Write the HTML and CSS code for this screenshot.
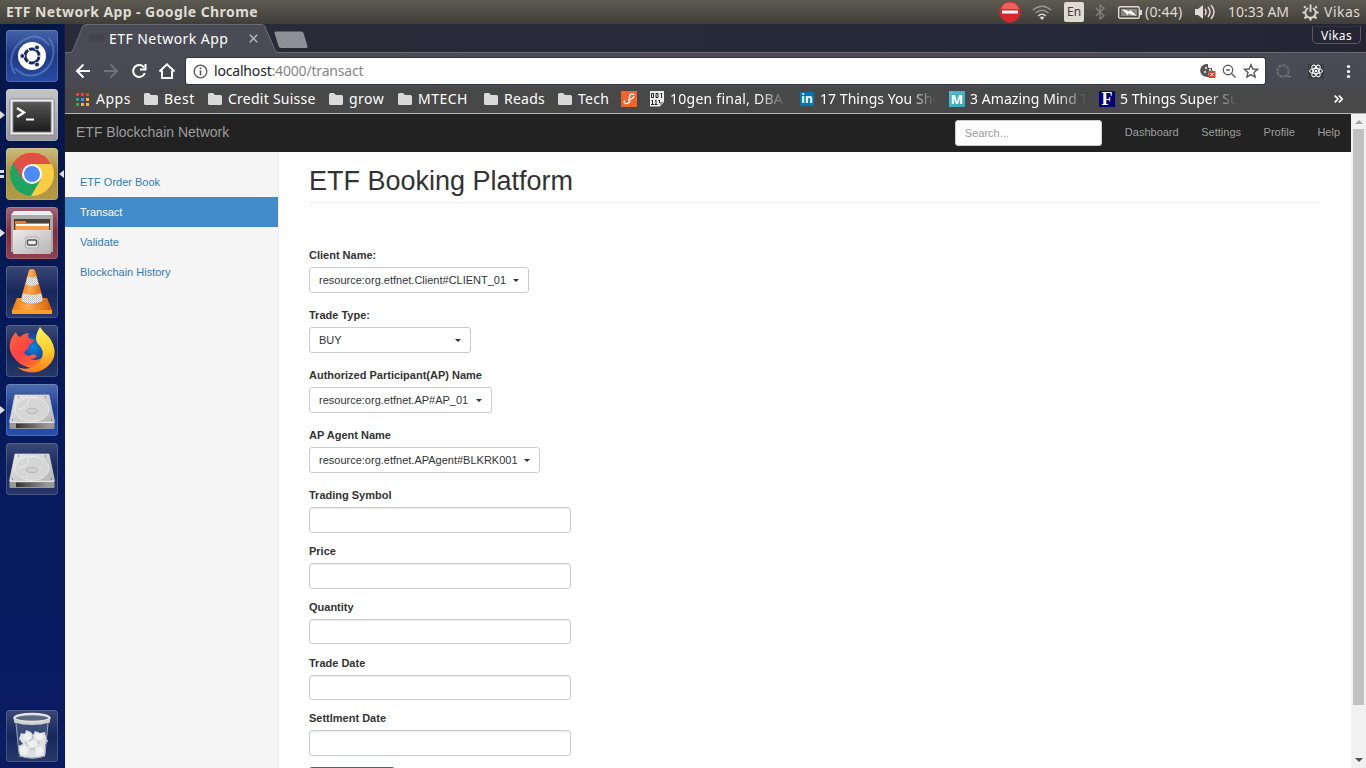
FILE: index.html
```html
<!DOCTYPE html>
<html lang="en">
<head>
<meta charset="utf-8">
<title>ETF Network App</title>
<link rel="stylesheet" href="styles.css">
</head>
<body>
<svg class="defs" width="0" height="0" aria-hidden="true">
  <defs>
    <linearGradient id="metal" x1="0" y1="0" x2="1" y2="1"><stop offset="0" stop-color="#ececec"/><stop offset="1" stop-color="#b4b4b4"/></linearGradient>
    <linearGradient id="dark" x1="0" y1="0" x2="0" y2="1"><stop offset="0" stop-color="#555"/><stop offset="1" stop-color="#1c1c1c"/></linearGradient>
    <linearGradient id="slot" x1="0" y1="0" x2="1" y2="0"><stop offset="0" stop-color="#333"/><stop offset="1" stop-color="#999"/></linearGradient>
    <linearGradient id="orange" x1="0" y1="0" x2="1" y2="0"><stop offset="0" stop-color="#f57900"/><stop offset=".4" stop-color="#ffab52"/><stop offset="1" stop-color="#d75c00"/></linearGradient>
    <linearGradient id="fox" x1="0" y1="0" x2="1" y2="1"><stop offset="0" stop-color="#ff6a35"/><stop offset=".45" stop-color="#ff3f45"/><stop offset="1" stop-color="#ff9a18"/></linearGradient>
    <linearGradient id="flame" x1="0" y1="0" x2="0" y2="1"><stop offset="0" stop-color="#fff45a"/><stop offset=".55" stop-color="#ffc928"/><stop offset="1" stop-color="#ff7a1c"/></linearGradient>
    <radialGradient id="globe"><stop offset="0" stop-color="#0a85df"/><stop offset="1" stop-color="#173a94"/></radialGradient>
    <pattern id="check" width="2" height="2" patternUnits="userSpaceOnUse"><rect width="2" height="2" fill="#f2f2f2"/><rect width="1" height="1" fill="#b5b5b5"/><rect x="1" y="1" width="1" height="1" fill="#c8c8c8"/></pattern>
    <symbol id="folder" viewBox="0 0 14 12"><path d="M0 1.500Q0 0 1.500 0H5l2 2h5.500Q14 2 14 3.500V10.500Q14 12 12.500 12h-11Q0 12 0 10.500z" fill="#dadada"/></symbol>
    <symbol id="drive" viewBox="0 0 52 52">
      <path d="M9 11h34l5.500 27h-45z" fill="url(#metal)" stroke="#ddd" stroke-width=".7"/>
      <path d="M3.500 38h45v6q0 1-1 1h-43q-1 0-1-1z" fill="#999"/><path d="M10 39.500h31v4.500H10z" fill="url(#slot)"/><path d="M4 38.500h44" stroke="#e6e6e6"/>
      <ellipse cx="26" cy="25.500" rx="17" ry="12" fill="#d6d6d6" stroke="#ececec" stroke-width=".8"/>
      <path d="M30 13q-8 0-8 5t-9 7" fill="none" stroke="#eee"/>
      <ellipse cx="26" cy="27" rx="5.500" ry="2.700" fill="#d0d0d0" stroke="#aaa" stroke-width=".7"/><path d="M6 36h1M45 36h1M12 13h1M39 13h1" stroke="#555"/>
    </symbol>
  </defs>
</svg>

<header class="panel">
  <div class="panel-title">ETF Network App - Google Chrome</div>
  <div class="indicators">
    <svg class="ind-stop" width="22" height="22" viewBox="0 0 22 22"><circle cx="11" cy="11" r="10.300" fill="#d9262c" stroke="#b33" stroke-width=".8"/><path d="M2 8a9.500 9.500 0 0 1 18 0z" fill="#ec625c"/><rect x="3" y="9.500" width="16" height="3" fill="#fff"/></svg>
    <svg class="ind-wifi" width="20" height="16" viewBox="0 0 20 16" fill="none" stroke="#99968e" stroke-width="1.500"><path d="M.8 6q9.200-7.500 18.400 0M3.500 9q6.500-5.400 13 0"/><path d="M6.200 12q3.800-3.400 7.600 0" stroke="#dfdbd2"/><path d="M10 16l-2.300-2.500q2.300-1.800 4.600 0z" fill="#dfdbd2" stroke="none"/></svg>
    <div class="ind-lang">En</div>
    <svg class="ind-bt" width="10" height="16" viewBox="0 0 10 16" fill="none" stroke="#85827a" stroke-width="1.300"><path d="M1 4l8 8-4 3V1l4 3-8 8"/></svg>
    <svg class="ind-battery" width="24" height="13" viewBox="0 0 24 13"><rect x=".7" y=".7" width="20.600" height="11.600" rx="1.500" fill="none" stroke="#dfdbd2" stroke-width="1.400"/><path d="M22 4h2v5h-2z" fill="#dfdbd2"/><path d="M3 3h16v7H3z" fill="#8b8880"/><path d="M4 3l8 2.500v-2l6.500 6.500-8.500-2.500v2z" fill="#fff"/></svg>
    <span class="ind-text time-left">(0:44)</span>
    <svg class="ind-sound" width="21" height="16" viewBox="0 0 21 16" fill="none" stroke="#dfdbd2" stroke-width="1.500"><path d="M0 5h3l5-4v14l-5-4H0z" fill="#dfdbd2" stroke="none"/><path d="M10 5q2 3 0 6M13 3q4 5 0 10M16 1q6 7 0 14"/></svg>
    <span class="ind-text clock">10:33 AM</span>
    <svg class="ind-gear" width="17" height="17" viewBox="0 0 18 18" fill="none" stroke="#dfdbd2"><path d="M6.500 4.200a5.500 5.500 0 1 0 5 0" stroke-width="2"/><path d="M9 .5v8" stroke-width="2"/><path d="M3.800 4L2.300 2.500M14.200 4l1.500-1.500M3 9H.5M15 9h2.500M4.500 13.500L2.700 15.300M13.500 13.500l1.800 1.800M9 15v2.500" stroke-width="2.300"/></svg>
    <span class="ind-text user">Vikas</span>
  </div>
</header>

<div class="desktop">
  <nav class="launcher">
    <div class="tile tile-ubuntu">
      <svg viewBox="0 0 52 52"><path d="M9 44A24 24 0 0 1 20 9q12-7 23 6M43 8a24 24 0 0 1-10 36q-14 5-24-6" fill="none" stroke="#8ba4dc" stroke-width="2" opacity=".4"/><circle cx="26" cy="26" r="14" fill="#fff"/><circle cx="26" cy="26" r="7" fill="none" stroke="#1a2a62" stroke-width="3" stroke-dasharray="13.400 1.260" transform="rotate(5 26 26)"/><g fill="#1a2a62" stroke="#fff" stroke-width=".8"><circle cx="16.300" cy="26" r="2.400"/><circle cx="31" cy="17.500" r="2.400"/><circle cx="31" cy="34.500" r="2.400"/></g></svg>
    </div>
    <div class="tile tile-terminal"><i class="mark mark-left"></i>
      <svg viewBox="0 0 52 52"><rect x="4" y="10" width="44" height="36" rx="1.500" fill="#eee" stroke="#888"/><rect x="7" y="13" width="38" height="30" fill="url(#dark)" stroke="#777"/><path d="M11 19l7 4.500-7 4.500" fill="none" stroke="#f4f4f4" stroke-width="2.400"/><path d="M20 30.500h8" stroke="#fff" stroke-width="2"/></svg>
    </div>
    <div class="tile tile-chrome"><i class="mark mark-left"></i><i class="mark mark-left mark-second"></i><i class="mark mark-right"></i>
      <svg viewBox="0 0 52 52"><circle cx="26" cy="26" r="22" fill="#fccd42"/><path d="M26 26L6.900 15A22 22 0 0 0 25 48l10-17z" fill="#1ea362"/><path d="M7 15l10 17 9-16h19.200A22 22 0 0 0 7 15z" fill="#df5046"/><circle cx="26" cy="26" r="10" fill="#fff"/><circle cx="26" cy="26" r="8" fill="#4c8bf5"/></svg>
    </div>
    <div class="tile tile-files"><i class="mark mark-left"></i>
      <svg viewBox="0 0 52 52"><path d="M8 4h36l3 5v36H5V9z" fill="#aaa"/><path d="M8 4h36l3 4H5z" fill="#eee"/><path d="M8 12h36v12H8z" fill="#4a4038"/><path d="M9 14h10l2 2h22v7H9z" fill="#e87925"/><path d="M10 17h33v2H10z" fill="#fff"/><path d="M10 19h33v5H10z" fill="#f6a04a"/><path d="M7 23h38v23q0 1-1 1H8q-1 0-1-1z" fill="url(#metal)"/><rect x="19.500" y="30" width="13" height="11" rx="2" fill="#ddd" stroke="#aaa"/><rect x="21.500" y="33" width="9" height="5" rx="1" fill="#eee" stroke="#555" stroke-width="1.500"/></svg>
    </div>
    <div class="tile">
      <svg viewBox="0 0 52 52"><path d="M11 32h30l5 12v4H6v-4z" fill="url(#orange)"/><path d="M6 44h40v4H6z" fill="#f7a128"/><path d="M23 4q3-2 6 0l9 32q-12 6-24 0z" fill="url(#orange)"/><path d="M22 10q4 3 8 0l2.500 8q-6.500 4-13 0zM17 27q9 4 18 0l2 8q-11 5-22 0z" fill="url(#check)"/></svg>
    </div>
    <div class="tile">
      <svg viewBox="0 0 52 52"><circle cx="27" cy="22" r="16" fill="url(#globe)"/><path d="M10 7q1 4 4 5 4-4 9-4-2 4 1 6l4 1q-1 3-4 4-2 2-2 5-3 1-4 4 3 4 7 2 3-2 6 1-2 3-7 3 8 3 14-3l4-9q8 10 1 17c-14 10-34 2-39-14-1-7 1-13 6-18z" fill="url(#fox)"/><path d="M34 2q3 5 9 10c7 10 8 20 0 28-9 10-24 9-32 2 12 5 23-2 25-10 2-5 0-9-4-13-4-5-1-12 2-17z" fill="url(#flame)"/></svg>
    </div>
    <div class="tile tile-drive"><i class="mark mark-left"></i><svg><use href="#drive"/></svg></div>
    <div class="tile"><svg><use href="#drive"/></svg></div>
    <div class="tile tile-trash">
      <svg viewBox="0 0 52 52"><path d="M9 9l4 36q13 5 26 0l4-36z" fill="#65779f" opacity=".4"/><path d="M12 36l5-2-4-5 2-6 4 1 1-4 5 2 2 3 2-4 5 2 5-1 1 5 2 4-3 4 1 4-1 7q-12 5-25 0z" fill="#dedfe0"/><g fill="#f0f0f0"><path d="M18 24l5-2 3 4-4 5-5-2zM29 24l6-1 3 4-4 4-5-3zM22 32l6-3 4 5-5 4-5-2zM14 38l5-3 4 5-3 5-6-1zM29 39l6-3 3 5-3 4-5 1z"/></g><path d="M26 25l1 4-4 2M34 31l-2 3M19 32l3 4M24 40l3-2 2 3" fill="none" stroke="#b4b6ba"/><path d="M10 13l3 31M42 13l-3 31M13 46q13 4 26 0" stroke="#9aa2bb" fill="none"/><ellipse cx="26" cy="8" rx="17.500" ry="4" fill="#5c6985" stroke="#e4e4e2" stroke-width="2.400"/><path d="M8 9q18 7 36 0v3.500q-18 5-36 0z" fill="#cfd0cd"/></svg>
    </div>
  </nav>

  <main class="window">
    <div class="tabstrip">
      <svg class="tab-shape" width="250" height="29" viewBox="0 0 250 29"><path d="M0 28.500h5Q7 28.500 8 26L17.500 3Q18.500.5 21 .5H197q2 0 3 2.500l10 23q1 2.500 3 2.500H250V29H0z" fill="#4b4b55"/><path d="M0 28.500h5Q7 28.500 8 26L17.500 3Q18.500.5 21 .5H197q2 0 3 2.500l10 23q1 2.500 3 2.500H250" fill="none" stroke="#6c6c75"/><path d="M211 7.500h25q2 0 2.500 1.500l4 13q.5 2-1.500 2h-25q-2 0-2.500-2l-4-13q-.5-1.500 1.500-1.500z" fill="#8e8f97"/></svg>
      <div class="tab"><span class="favicon"></span><span class="tab-title">ETF Network App</span><svg width="9" height="9" viewBox="0 0 9 9"><path d="M.8.8l7.400 7.400M8.200.8L.8 8.200" stroke="#b5b5ba" stroke-width="1.500"/></svg></div>
      <div class="profile">Vikas</div>
    </div>
    <div class="toolbar">
      <svg class="nav-icons" width="121" height="34" viewBox="0 0 121 34" fill="none" stroke="#fff" stroke-width="2"><path d="M25 18H12.500M18.500 11.500L12 18l6.500 6.500"/><path d="M39 18h12.500M45.500 11.500L52 18l-6.500 6.500" stroke="#71717a"/><path d="M79 14.500a6 6 0 1 0 .8 5.500M80.500 11v5.500H75"/><path d="M94.500 18.500L102 11.300l7.500 7.200M97 17.500V25h10v-7.500"/></svg>
      <div class="address">
        <svg width="15" height="15" viewBox="0 0 15 15"><circle cx="7.500" cy="7.500" r="6.300" fill="none" stroke="#555" stroke-width="1.300"/><path d="M7.500 6.500v4.800M7.500 3.600v1.600" stroke="#555" stroke-width="1.600"/></svg>
        <span class="url"><b>localhost</b>:4000/transact</span>
        <svg class="address-icons" width="60" height="18" viewBox="0 0 60 18"><path d="M8 2a7 6.500 0 1 0 6 8L12 8V6q-3 1-4-1z" fill="#555"/><path d="M5 6h2M4 10h2M9 8h2M8 12h1" stroke="#fff" stroke-width="1.500"/><rect x="8.500" y="9" width="7" height="7" fill="#db4437"/><path d="M10.500 11l3 3M13.500 11l-3 3" stroke="#fff"/><circle cx="28" cy="8" r="4.700" fill="none" stroke="#606060" stroke-width="1.400"/><path d="M26 8h4M31.500 11.500l4 4" stroke="#606060" stroke-width="1.500"/><path d="M51 2.700l1.900 4.300 4.700.4-3.600 3.100 1.100 4.600-4.100-2.500-4.100 2.500 1.100-4.600-3.500-3.100 4.600-.4z" fill="none" stroke="#555" stroke-width="1.400"/></svg>
      </div>
      <svg class="extensions" width="101" height="34" viewBox="0 0 101 34"><circle cx="18" cy="18" r="5.700" fill="none" stroke="#686871" stroke-width="2.500" stroke-dasharray="3.500 .8"/><path d="M22 23l4 1" stroke="#77777f" stroke-width="1.500"/><rect x="43" y="11" width="16" height="15" fill="#3c3c43"/><g fill="none" stroke="#fff"><ellipse cx="51" cy="18" rx="6.500" ry="2.600"/><ellipse cx="51" cy="18" rx="6.500" ry="2.600" transform="rotate(60 51 18)"/><ellipse cx="51" cy="18" rx="6.500" ry="2.600" transform="rotate(120 51 18)"/></g><circle cx="51" cy="18" r="1.300" fill="#fff"/><g fill="#fff"><circle cx="83.500" cy="13.500" r="1.600"/><circle cx="83.500" cy="18.500" r="1.600"/><circle cx="83.500" cy="23.500" r="1.600"/></g></svg>
    </div>
    <div class="bookmarks">
      <div class="bm bm-apps"><svg width="13" height="13" viewBox="0 0 13 13"><path d="M0 0h3v3H0zM5 0h3v3H5zM10 0h3v3h-3z" fill="#f33c35"/><path d="M0 5h3v3H0zM0 10h3v3H0z" fill="#32a45b"/><path d="M5 5h3v3H5z" fill="#4389f5"/><path d="M10 5h3v3h-3zM5 10h3v3H5zM10 10h3v3h-3z" fill="#f8b51a"/></svg><span>Apps</span></div>
      <div class="bm bm-best"><svg width="14" height="12"><use href="#folder"/></svg><span>Best</span></div>
      <div class="bm bm-credit"><svg width="14" height="12"><use href="#folder"/></svg><span>Credit Suisse</span></div>
      <div class="bm bm-grow"><svg width="14" height="12"><use href="#folder"/></svg><span>grow</span></div>
      <div class="bm bm-mtech"><svg width="14" height="12"><use href="#folder"/></svg><span>MTECH</span></div>
      <div class="bm bm-reads"><svg width="14" height="12"><use href="#folder"/></svg><span>Reads</span></div>
      <div class="bm bm-tech"><svg width="14" height="12"><use href="#folder"/></svg><span>Tech</span></div>
      <div class="bm bm-scala"><svg width="16" height="16" viewBox="0 0 16 16"><path d="M0 0h16v16H0z" fill="#f4622c"/><path d="M13.500 3.500Q9 2 8.500 5t.5 5Q8 13 4.500 12.500 2 11.500 4 9.500M7 9q5-1 6-4" fill="none" stroke="#fff" stroke-width="1.300"/></svg></div>
      <div class="bm bm-long"><svg width="15" height="16" viewBox="0 0 15 16"><path d="M0 0h14v11l-4 4.500H0z" fill="#eee"/><path d="M10 15v-4h4z" fill="#999"/><g fill="none" stroke="#222"><path d="M1.500 2.500h2v4h-2zM6 2.500h2v4H6zM10.500 3l1-1v5M1.500 10l1-1v5M5 10l1-1v5M8.500 10l1-1v3M1 13.500h3M4.500 13.500h3"/></g></svg><span>10gen final, DBA</span></div>
      <div class="bm bm-linkedin"><i class="badge badge-in">in</i><span>17 Things You Sho</span></div>
      <div class="bm bm-long bm-mind"><i class="badge badge-m">M</i><span>3 Amazing Mind T</span></div>
      <div class="bm bm-long bm-things"><i class="badge badge-f">F</i><span>5 Things Super Su</span></div>
      <div class="more"><svg width="9" height="8" viewBox="0 0 9 8"><path d="M.7.7L4 4 .7 7.300M4.900.7L8.200 4 4.900 7.300" fill="none" stroke="#fff" stroke-width="1.700"/></svg></div>
    </div>

    <div class="viewport">
      <div class="page">
        <div class="navbar">
          <a class="brand">ETF Blockchain Network</a>
          <input class="search" type="text" placeholder="Search...">
          <a class="link-dashboard">Dashboard</a><a class="link-settings">Settings</a><a class="link-profile">Profile</a><a class="link-help">Help</a>
        </div>
        <div class="content">
          <div class="sidebar"><a>ETF Order Book</a><a class="active">Transact</a><a>Validate</a><a>Blockchain History</a></div>
          <div class="booking">
            <h1>ETF Booking Platform</h1>
            <form>
              <div class="choice"><label>Client Name:</label><button type="button" class="select-client">resource:org.etfnet.Client#CLIENT_01<i class="caret"></i></button></div>
              <div class="choice"><label>Trade Type:</label><button type="button" class="select-type">BUY<i class="caret"></i></button></div>
              <div class="choice"><label>Authorized Participant(AP) Name</label><button type="button" class="select-ap">resource:org.etfnet.AP#AP_01<i class="caret"></i></button></div>
              <div class="choice"><label>AP Agent Name</label><button type="button" class="select-agent">resource:org.etfnet.APAgent#BLKRK001<i class="caret"></i></button></div>
              <div class="field"><label>Trading Symbol</label><input type="text"></div>
              <div class="field"><label>Price</label><input type="text"></div>
              <div class="field"><label>Quantity</label><input type="text"></div>
              <div class="field"><label>Trade Date</label><input type="text"></div>
              <div class="field"><label>Settlment Date</label><input type="text"></div>
              <div class="submit"></div>
            </form>
          </div>
        </div>
      </div>
      <div class="scrollbar"><i class="arrow-up"></i><div class="thumb"></div><i class="arrow-down"></i></div>
    </div>
  </main>
</div>
</body>
</html>
```
FILE: styles.css
```css
* { box-sizing: border-box; }
html, body { height: 100%; }
body { margin: 0; overflow: hidden; font-family: "Noto Sans", sans-serif; color: #333; display: flex; flex-direction: column; }
svg { display: block; flex: none; }
.defs { position: absolute; }

/* desktop panel */
.panel { height: 24px; flex: none; display: flex; align-items: center; padding-left: 6px; color: #dfdbd2; background: linear-gradient(#5d5a50, #3f3e39); font-size: 14px; }
.panel-title { font-weight: 700; white-space: nowrap; letter-spacing: .42px; padding-bottom: 2px; }
.indicators { margin-left: auto; display: flex; align-items: center; width: 367px; height: 24px; }
.ind-wifi { margin-left: 11px; }
.ind-lang { width: 20px; height: 20px; margin-left: 12px; border-radius: 2px; background: #dfdbd2; color: #3c3b37; font-size: 12px; line-height: 20px; text-align: center; }
.ind-bt { margin-left: 11px; }
.ind-battery { margin-left: 13px; }
.ind-text { flex: none; white-space: nowrap; padding-bottom: 2px; }
.time-left { width: 46px; padding-left: 3px; letter-spacing: .2px; }
.ind-sound { margin-left: 7px; }
.clock { width: 75px; padding-left: 12px; }
.ind-gear { margin-left: 11px; }
.user { margin-left: 5px; letter-spacing: .5px; }

.desktop { flex: 1; min-height: 0; display: flex; }

/* launcher */
.launcher { width: 65px; flex: none; display: flex; flex-direction: column; gap: 7px; padding: 6px 0 6px 6px; background: linear-gradient(#051747, #061a5c 55%, #0b1c62); border-right: 1px solid #151b46; }
.tile { position: relative; width: 52px; height: 52px; flex: none; border-radius: 4px; background: linear-gradient(#3a4874, #16275d 50%, #273868); box-shadow: inset 0 0 0 1px rgba(255,255,255,.16); }
.tile svg { width: 52px; height: 52px; }
.tile-ubuntu { background: linear-gradient(#4363a8, #1d3a86 50%, #284da5); }
.tile-terminal { background: linear-gradient(#c5c5c8, #97989f); }
.tile-chrome { background: linear-gradient(#cabc80, #ab913c 45%, #b49b48); }
.tile-files { background: linear-gradient(#a06474, #802c3c 50%, #8f4250); }
.tile-drive { background: linear-gradient(#4e6dae, #1c3c91 50%, #2851aa); }
.tile-trash { margin-top: auto; }
.mark { position: absolute; top: 22px; border: 4px solid transparent; }
.mark-left { left: -6px; border-left: 5px solid #ddd; border-right: 0; }
.tile-chrome .mark-left { top: 22px; width: 4px; height: 3px; border: 0; background: #ddd; }
.tile-chrome .mark-second { top: 27px; }
.mark-right { right: -6px; border-right: 5px solid #ddd; border-left: 0; }

/* browser chrome */
.window { flex: 1; min-width: 0; display: flex; flex-direction: column; }
.tabstrip { position: relative; height: 29px; flex: none; display: flex; background: linear-gradient(90deg, #2a2b38, #252939 75%, #262433); border-bottom: 1px solid #6c6c75; }
.tab-shape { position: absolute; left: 0; top: 0; }
.tab { position: relative; display: flex; align-items: center; width: 210px; padding-left: 24px; color: #fff; }
.favicon { width: 15px; height: 6px; background: #424249; filter: blur(1px); }
.tab-title { width: 140px; margin-left: 5px; font-size: 14px; letter-spacing: .45px; white-space: nowrap; }
.profile { margin: 2px 5px 0 auto; width: 49px; height: 18px; border: 1px solid #5a5a67; border-top-color: #343442; border-radius: 0 0 5px 5px; color: #fff; font-size: 12px; letter-spacing: .4px; line-height: 17px; text-align: center; }
.toolbar { height: 34px; flex: none; display: flex; background: linear-gradient(#4c4b55, #484953); }
.address { flex: 1; display: flex; align-items: center; height: 26px; margin-top: 5px; padding-left: 7px; background: #fff; border-radius: 2px; box-shadow: 0 0 0 1px #34343c; }
.url { margin-left: 6px; padding-bottom: 2px; font-size: 14px; letter-spacing: -.18px; color: #868686; white-space: nowrap; }
.url b { color: #222; font-weight: 400; }
.address-icons { margin-left: auto; margin-right: 5px; }
.bookmarks { height: 27px; flex: none; display: flex; align-items: center; padding: 0 0 2px 11px; background: #484848; border-bottom: 1px solid #b5b5b5; color: #fff; font-size: 14px; }
.bm { display: flex; align-items: center; flex: none; height: 24px; white-space: nowrap; overflow: hidden; }
.bm span { margin-left: 6px; padding-bottom: 2px; letter-spacing: .25px; }
.bm-apps { width: 68px; }
.bm-apps span { margin-left: 7px; letter-spacing: .5px; }
.bm-best { width: 64px; }
.bm-best span { letter-spacing: .5px; }
.bm-credit { width: 121px; }
.bm-grow { width: 69px; }
.bm-grow span { letter-spacing: .5px; }
.bm-mtech { width: 86px; }
.bm-mtech span { letter-spacing: .5px; }
.bm-reads { width: 74px; }
.bm-tech { width: 63px; }
.bm-scala { width: 29px; }
.bm-long { width: 150px; }
.bm-long span, .bm-linkedin span { width: 118px; margin-left: 5px; -webkit-mask-image: linear-gradient(90deg, #000 74%, transparent 99%); mask-image: linear-gradient(90deg, #000 74%, transparent 99%); }
.bm-linkedin { width: 149px; }
.bm-linkedin span { margin-left: 6px; letter-spacing: .05px; }
.bm-mind span, .bm-things span { letter-spacing: .05px; }
.badge { flex: none; width: 16px; height: 16px; color: #fff; font-style: normal; font-weight: 700; text-align: center; line-height: 16px; }
.badge-in { width: 14px; height: 14px; font-size: 12px; line-height: 13px; background: #0077b5; }
.badge-m { font-size: 13px; background: linear-gradient(135deg, #55bdd0, #37a4bb); }
.badge-f { font: 700 18px/16px "Liberation Serif", serif; background: #00007a; }
.more { margin-left: auto; margin-right: 23px; }

/* web page */
.viewport { flex: 1; min-height: 0; display: flex; font-family: "Liberation Sans", Arial, sans-serif; font-size: 11px; line-height: 15px; }
.page { flex: 1; min-width: 0; overflow: hidden; display: flex; flex-direction: column; background: #fff; }
.navbar { height: 38px; flex: none; display: flex; align-items: center; padding: 0 11px; background: #222; color: #9d9d9d; }
.brand { margin-right: auto; font-size: 14px; padding-bottom: 2px; }
.search { width: 147px; height: 26px; margin-right: 23px; padding: 0 9px; border: 1px solid #ccc; border-radius: 3px; font: 11px "Liberation Sans", Arial, sans-serif; }
.search::placeholder { color: #999; }
.link-dashboard, .link-settings, .link-profile { margin-right: 22.600px; }
.navbar a:not(.brand) { padding-bottom: 2px; }
.content { flex: 1; display: flex; min-height: 0; }
.sidebar { width: 214px; flex: none; padding-top: 15px; background: #f5f5f5; border-right: 1px solid #eee; }
.sidebar a { display: block; height: 30px; padding: 8px 15px; color: #337ab7; }
.sidebar .active { background: #428bca; color: #fff; }
.booking { flex: 1; padding: 14px 31px 0 30px; }
h1 { height: 37px; margin: 0 0 45px; font-size: 27px; line-height: 31px; font-weight: 400; border-bottom: 1px solid #eee; }
label { display: block; height: 15px; margin-bottom: 4px; font-weight: 700; }
.choice { height: 60px; }
.choice button { display: flex; align-items: center; justify-content: space-between; height: 26px; padding: 0 9px; background: #fff; border: 1px solid #ccc; border-radius: 3px; color: #333; font: 11px "Liberation Sans", Arial, sans-serif; white-space: nowrap; }
.caret { border: 3px solid transparent; border-top-color: #333; border-bottom: 0; }
.select-client { width: 220px; }
.select-type { width: 162px; }
.select-ap { width: 183px; }
.select-agent { width: 231px; }
.field { height: 55.850px; }
.field input { display: block; width: 262px; height: 25.700px; border: 1px solid #ccc; border-radius: 3px; box-shadow: inset 0 1px 1px rgba(0,0,0,.075); }
.submit { width: 86px; height: 26px; background: #337ab7; border: 1px solid #2e6da4; border-radius: 3px; }
.scrollbar { width: 15px; flex: none; display: flex; flex-direction: column; align-items: center; background: #f1f1f1; }
.arrow-up { margin: 6px 0 5px; border: 4px solid transparent; border-top: 0; border-bottom-color: #a3a3a3; }
.thumb { width: 11px; height: 576px; background: #c1c1c1; }
.arrow-down { margin: auto 0 6px; border: 4px solid transparent; border-bottom: 0; border-top-color: #505050; }
```
